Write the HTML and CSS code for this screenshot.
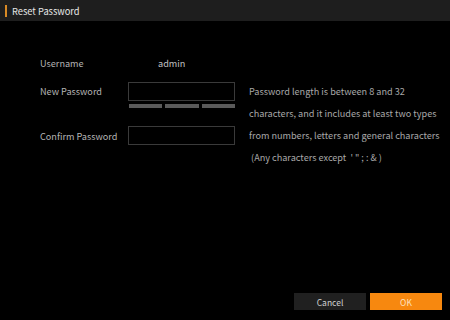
FILE: index.html
```html
<!DOCTYPE html>
<html lang="en">
<head>
    <meta charset="UTF-8" />
    <title>Reset Password</title>
    <link rel="stylesheet" href="styles.css">
</head>
<body>
<div class="dialog">
    <div class="dialog-header">
        <span class="accent"></span>
        <span class="title">Reset Password</span>
    </div>

    <div class="dialog-body">
        <div class="form">
            <div class="row">
                <div class="label">Username</div>
                <div class="value">admin</div>
            </div>

            <div class="row row-new">
                <div class="label">New Password</div>
                <input type="password" class="input" />
            </div>

            <div class="row row-strength">
                <div class="label"></div>
                <div class="strength">
                    <span></span><span></span><span></span>
                </div>
            </div>

            <div class="row row-confirm">
                <div class="label">Confirm Password</div>
                <input type="password" class="input" />
            </div>
        </div>

        <div class="hint">
            <p>Password length is between 8 and 32</p>
            <p>characters, and it includes at least two types</p>
            <p>from numbers, letters and general characters</p>
            <p>&nbsp;(Any characters except &nbsp;' " ; : &amp; )</p>
        </div>
    </div>

    <div class="dialog-footer">
        <button type="button" class="btn btn-cancel">Cancel</button>
        <button type="button" class="btn btn-ok">OK</button>
    </div>
</div>
</body>
</html>
```

FILE: styles.css
```css
body {
    margin: 0;
    background: #000;
    font-family: 'Noto Sans CJK SC', 'Noto Sans', sans-serif;
    font-size: 9.15px;
    color: #b4b4b4;
}
.dialog {
    width: 450px;
    height: 320px;
    display: flex;
    flex-direction: column;
}
.dialog-header {
    height: 21px;
    background: #1e1e1e;
    display: flex;
    align-items: center;
    padding-left: 5px;
}
.accent {
    width: 2px;
    height: 12px;
    background: #d98a25;
    margin-right: 5px;
}
.title {
    font-size: 9.3px;
    color: #e6e6e6;
}
.dialog-body {
    display: flex;
    padding: 33px 0 0 40px;
}
.form {
    display: flex;
    flex-direction: column;
}
.row {
    display: flex;
    align-items: center;
    height: 18px;
}
.row-new {
    margin-top: 10px;
}
.row-strength {
    height: 4px;
    margin-top: 4px;
}
.row-confirm {
    height: 19px;
    margin-top: 18px;
}
.label {
    width: 88px;
}
.value {
    padding-left: 30px;
    color: #c0c0c0;
}
.input {
    width: 107px;
    height: 19px;
    box-sizing: border-box;
    margin: 0;
    background: #000;
    border: 1px solid #3a3a3a;
    outline: none;
}
.strength {
    width: 106px;
    display: flex;
    gap: 3px;
    padding-left: 1px;
}
.strength span {
    flex: 1;
    height: 4px;
    background: #5a5a5a;
}
.hint {
    margin: 26px 0 0 14px;
    color: #a8a8a8;
}
.hint p {
    margin: 0;
    line-height: 22px;
    white-space: pre;
}
.dialog-footer {
    margin-top: auto;
    display: flex;
    justify-content: flex-end;
    gap: 4px;
    padding: 0 8px 10px 0;
}
.btn {
    width: 72px;
    height: 17px;
    border: none;
    font-family: 'Noto Sans CJK SC', 'Noto Sans', sans-serif;
    font-size: 8.5px;
    padding: 0;
    cursor: pointer;
}
.btn-cancel {
    background: #202020;
    color: #d0d0d0;
}
.btn-ok {
    background: #f7880f;
    color: #fde2bf;
}
```
